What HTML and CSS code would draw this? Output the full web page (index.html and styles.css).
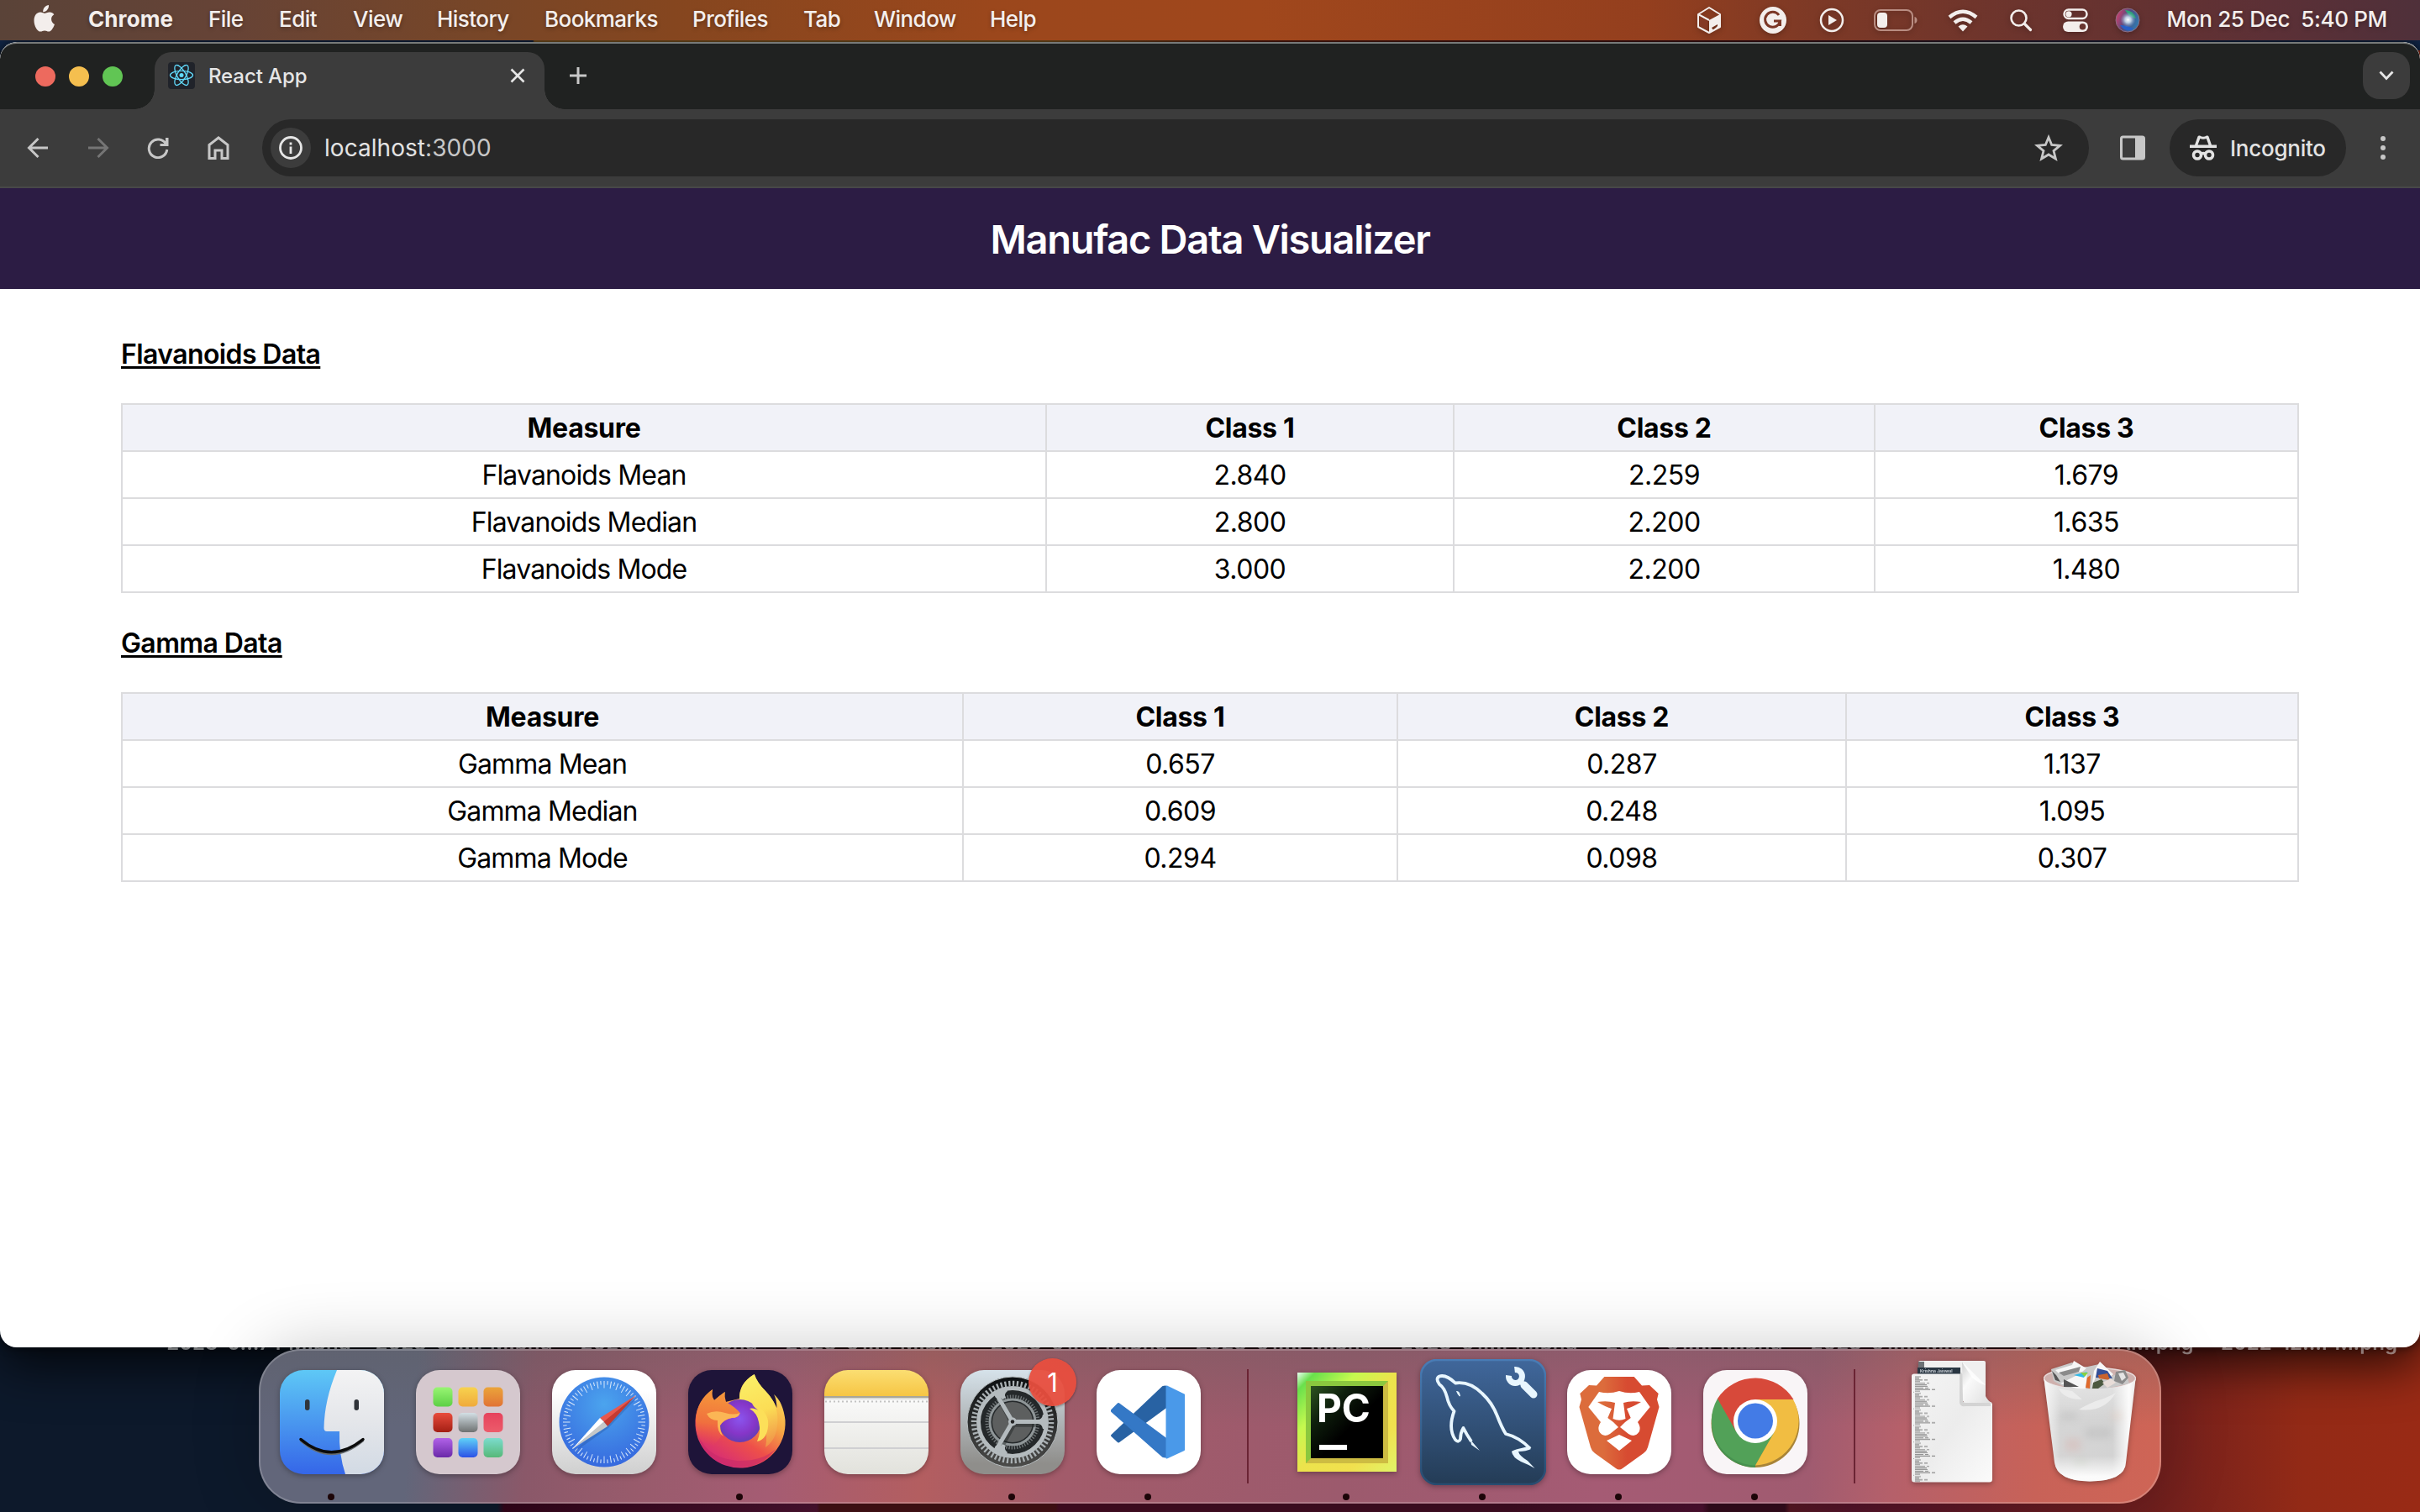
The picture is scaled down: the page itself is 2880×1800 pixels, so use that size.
FILE: index.html
```html
<!DOCTYPE html>
<html lang="en">
<head>
<meta charset="utf-8">
<title>React App</title>
<link rel="stylesheet" href="styles.css">
</head>
<body>
<div class="desktop">
  <div class="desk-files">
    <span>2023-0...7 PM.png</span><span>2023-01...PM.png</span><span>2023-01...PM.png</span><span>2023-01...PM.png</span><span>2023-01...PM.png</span><span>2023-01...PM.png</span><span>2023-01...PM.png</span><span>2023-01...PM.png</span><span>2023-01...PM.png</span><span>2023-01...AM.png</span><span>2022-12...PM.png</span>
  </div>

  <header class="menubar">
    <svg class="apple" viewBox="0 0 26 32"><path fill="#f3eeec" d="M18 0c.3 2.500-.7 4.600-2 6-1.300 1.500-3 2.300-4.800 2.100-.2-2.300.8-4.400 2-5.700C14.500 1 16.400.1 18 0zM25 22.900c-1.800 4.800-4.400 8.700-7 8.700-1.900 0-2.600-1.100-4.900-1.100s-3.100 1.100-4.900 1.100C4.400 31.600.5 24.700.5 18.400.5 12.300 4.200 8.600 8 8.600c2.200 0 3.900 1.300 5.300 1.300 1.300 0 3.300-1.500 6-1.300 2 .1 3.800.9 5 2.700-2.300 1.500-3.300 3.500-3.200 5.700.1 2.700 1.600 4.900 3.900 5.900z"/></svg>
    <nav class="menus"><b>Chrome</b><span>File</span><span>Edit</span><span>View</span><span>History</span><span>Bookmarks</span><span>Profiles</span><span>Tab</span><span>Window</span><span>Help</span></nav>
    <div class="status">
      <svg viewBox="0 0 30 34" width="30" height="34"><path fill="none" stroke="#f3eeec" stroke-width="2" stroke-linejoin="round" d="M15 2 28 10V25L15 32 2 25V10Z"/><path fill="#f3eeec" fill-rule="evenodd" d="M2 10 15 17V32L28 25V10L15 17M18 26l7-4v2l-5 5z"/><path fill="none" stroke="#f3eeec" stroke-width="2" d="M2 10 15 17"/><path fill="#853a25" d="M4 12.500 13.500 18V29L4 24Z"/></svg>
      <svg viewBox="0 0 32 32" width="32" height="32"><circle cx="16" cy="16" r="16" fill="#f3eeec"/><path fill="none" stroke="#7b3726" stroke-width="3" d="M23 10A9 9 0 1 0 24.500 17H17M24.500 16v7"/></svg>
      <svg viewBox="0 0 30 30" width="30" height="30"><circle cx="15" cy="15" r="13" fill="none" stroke="#f3eeec" stroke-width="2.500"/><path fill="#f3eeec" d="M11 9v12l10-6z"/></svg>
      <svg viewBox="0 0 52 26" width="52" height="26"><rect x="1" y="1" width="45" height="24" rx="7" fill="none" stroke="#b98d82" stroke-width="2"/><path fill="#b98d82" d="M48.500 9c4 1 4 7 0 8z"/><rect x="4" y="4" width="12" height="18" rx="4" fill="#f3eeec"/></svg>
      <svg viewBox="0 0 36 27" width="36" height="27"><g fill="none" stroke="#f3eeec" stroke-width="4.500"><path d="M2 9.500Q18-4 34 9.500M8 16Q18 7.500 28 16"/></g><path fill="#f3eeec" d="M12.500 20.500Q18 16 23.500 20.500L18 26.500Z"/></svg>
      <svg viewBox="0 0 28 28" width="28" height="28"><circle cx="11.500" cy="11.500" r="9" fill="none" stroke="#f3eeec" stroke-width="2.600"/><path stroke="#f3eeec" stroke-width="3.200" stroke-linecap="round" d="m18.500 18.500 7 7"/></svg>
      <svg viewBox="0 0 30 28" width="30" height="28"><rect x="1.500" y="1.500" width="27" height="10.500" rx="5.200" fill="none" stroke="#f3eeec" stroke-width="2.500"/><circle cx="7" cy="6.800" r="3.600" fill="#f3eeec"/><rect y="15.500" width="30" height="12.500" rx="6.200" fill="#f3eeec"/><circle cx="23.500" cy="21.800" r="3.800" fill="#68352f"/></svg>
      <svg viewBox="0 0 30 30" width="30" height="30"><defs><linearGradient id="siri" x1="0" y1=".3" x2="1" y2=".7"><stop stop-color="#d0406c"/><stop offset=".45" stop-color="#514a80"/><stop offset="1" stop-color="#2c7fb4"/></linearGradient><radialGradient id="siriGlow"><stop stop-color="#fff"/><stop offset=".4" stop-color="#d6ecfa" stop-opacity=".8"/><stop offset="1" stop-color="#8ac" stop-opacity="0"/></radialGradient></defs><circle cx="15" cy="15" r="14" fill="url(#siri)" stroke="#8c6d84"/><path d="M12 3q10 0 13 10-8-1-13-10z" fill="#2fa37a"/><path d="M6 21q8 0 16 4-8 6-16-4z" fill="#2861c8"/><circle cx="15.500" cy="14.500" r="9" fill="url(#siriGlow)"/></svg>
    </div>
    <div class="clock">Mon 25 Dec&nbsp; 5:40 PM</div>
  </header>

  <main class="window">
    <div class="tabstrip">
      <div class="lights"><i class="red"></i><i class="yellow"></i><i class="green"></i></div>
      <div class="tab">
        <svg viewBox="0 0 32 32" width="32" height="32"><rect width="32" height="32" rx="4" fill="#20232a"/><g fill="none" stroke="#61dafb" stroke-width="1.300"><ellipse cx="16" cy="15.500" rx="13.500" ry="5.200"/><ellipse cx="16" cy="15.500" rx="13.500" ry="5.200" transform="rotate(60 16 15.500)"/><ellipse cx="16" cy="15.500" rx="13.500" ry="5.200" transform="rotate(120 16 15.500)"/></g><circle cx="16" cy="15.500" r="2.500" fill="#61dafb"/></svg>
        <span class="tab-title">React App</span>
        <svg viewBox="0 0 18 18" width="18" height="18"><path stroke="#e6e6e6" stroke-width="2.600" d="m1.500 1.500 15 15m0-15-15 15"/></svg>
      </div>
      <svg class="plus" viewBox="0 0 20 20" width="20" height="20"><path stroke="#c8c8c8" stroke-width="3" d="M10 0v20M0 10h20"/></svg>
      <div class="tabsearch"><svg viewBox="0 0 18 12" width="18" height="12"><path fill="none" stroke="#e6e6e6" stroke-width="2.800" d="m1.500 1.500 7.500 8 7.500-8"/></svg></div>
    </div>

    <div class="toolbar">
      <div class="navs">
        <svg viewBox="0 0 26 26" width="26" height="26"><path fill="none" stroke="#c7c7c7" stroke-width="3" d="M25 13H3M13.500 2 2.500 13l11 11"/></svg>
        <svg viewBox="0 0 26 26" width="26" height="26"><path fill="none" stroke="#757575" stroke-width="3" d="M1 13h22M12.500 2l11 11-11 11"/></svg>
        <svg viewBox="0 0 26 26" width="26" height="26"><path fill="none" stroke="#c7c7c7" stroke-width="3" d="M22.500 8.500A10.800 10.800 0 1 0 23.800 15"/><path fill="#c7c7c7" d="M25.500 1v10h-10V8H22V1z"/></svg>
        <svg viewBox="0 0 26 30" width="26" height="30"><path fill="none" stroke="#c7c7c7" stroke-width="3" d="M2 11.500 13 3l11 8.500V27.500H17V18H9v9.500H2z"/></svg>
      </div>
      <div class="omnibox">
        <div class="info"><svg viewBox="0 0 28 28" width="28" height="28"><circle cx="14" cy="14" r="12.500" fill="none" stroke="#e6e6e6" stroke-width="2.800"/><path stroke="#e6e6e6" stroke-width="2.800" d="M14 12.500V21M14 7.500v3"/></svg></div>
        <span class="url">localhost<em>:3000</em></span>
        <svg viewBox="0 0 34 32" width="34" height="32"><path fill="none" stroke="#c7c7c7" stroke-width="2.800" d="m17 3.500 3.700 9 9.800.8-7.500 6.300 2.400 9.400L17 24l-8.400 5L11 19.600 3.500 13.300l9.800-.8z"/></svg>
      </div>
      <svg class="panel" viewBox="0 0 30 30" width="30" height="30"><rect x="1.500" y="2" width="27" height="26" rx="2" fill="none" stroke="#c7c7c7" stroke-width="3"/><path fill="#c7c7c7" d="M18 2h10v26H18z"/></svg>
      <div class="incog">
        <svg viewBox="0 0 32 30" width="32" height="30"><path fill="#e3e3e3" fill-rule="evenodd" d="M12 .5q4 2.500 8 0 2-.5 2.500 1L26 11.500H32V15H0v-3.500H6L9.500 1.500Q10 0 12 .5zM12.300 4 9.500 11.500h13L19.700 4Q16 5.500 12.300 4z"/><g fill="none" stroke="#e3e3e3" stroke-width="3.600"><circle cx="9" cy="23.500" r="4.500"/><circle cx="23" cy="23.500" r="4.500"/><path d="M13 22.500q3-2 6 0"/></g></svg>
        <span>Incognito</span>
      </div>
      <div class="kebab"><i></i><i></i><i></i></div>
    </div>

    <section class="page">
      <h1>Manufac Data Visualizer</h1>
      <div class="content">
        <h2>Flavanoids Data</h2>
        <table class="flav">
          <colgroup><col><col><col><col></colgroup>
          <tr><th>Measure</th><th>Class 1</th><th>Class 2</th><th>Class 3</th></tr>
          <tr><td>Flavanoids Mean</td><td>2.840</td><td>2.259</td><td>1.679</td></tr>
          <tr><td>Flavanoids Median</td><td>2.800</td><td>2.200</td><td>1.635</td></tr>
          <tr><td>Flavanoids Mode</td><td>3.000</td><td>2.200</td><td>1.480</td></tr>
        </table>
        <h2>Gamma Data</h2>
        <table class="gamma">
          <colgroup><col><col><col><col></colgroup>
          <tr><th>Measure</th><th>Class 1</th><th>Class 2</th><th>Class 3</th></tr>
          <tr><td>Gamma Mean</td><td>0.657</td><td>0.287</td><td>1.137</td></tr>
          <tr><td>Gamma Median</td><td>0.609</td><td>0.248</td><td>1.095</td></tr>
          <tr><td>Gamma Mode</td><td>0.294</td><td>0.098</td><td>0.307</td></tr>
        </table>
      </div>
    </section>
  </main>

  <div class="dock">
    <div class="app running">
      <svg class="squircle" viewBox="0 0 124 124"><defs><linearGradient id="fb" x2="0" y2="1"><stop stop-color="#5ec8f6"/><stop offset="1" stop-color="#3566e8"/></linearGradient><linearGradient id="fw" x2="0" y2="1"><stop stop-color="#f3f3f4"/><stop offset=".5" stop-color="#e4e6ea"/><stop offset="1" stop-color="#d2dae4"/></linearGradient></defs><path fill="url(#fb)" d="M0 0h124v124H0z"/><path fill="url(#fw)" d="M68 0Q53 36 52.500 69Q52.500 73 56 73H71Q70 100 78 124H124V0Z"/><rect x="30" y="35" width="5.500" height="13" rx="2.700" fill="#30343a"/><rect x="88.500" y="35" width="5.500" height="13" rx="2.700" fill="#30343a"/><path fill="none" stroke="#666c70" stroke-width="3.500" stroke-linecap="round" d="M25.500 84Q61 115 98.500 84"/><path fill="none" stroke="#0b0b0b" stroke-width="3.500" stroke-linecap="round" d="M25 82.500Q61 113 99 82.500"/></svg>
    </div>
    <div class="app">
      <svg class="squircle" viewBox="0 0 124 124"><defs><linearGradient id="l1" x2="0" y2="1"><stop stop-color="#98f573"/><stop offset="1" stop-color="#5dcf45"/></linearGradient><linearGradient id="l2" x2="0" y2="1"><stop stop-color="#f7d24e"/><stop offset="1" stop-color="#f0aa3c"/></linearGradient><linearGradient id="l3" x2="0" y2="1"><stop stop-color="#eba43a"/><stop offset="1" stop-color="#e17335"/></linearGradient><linearGradient id="l4" x2="0" y2="1"><stop stop-color="#e94b3c"/><stop offset="1" stop-color="#a31f14"/></linearGradient><linearGradient id="l5" x2="0" y2="1"><stop stop-color="#d3dfe5"/><stop offset="1" stop-color="#6e7171"/></linearGradient><linearGradient id="l6" x2="0" y2="1"><stop stop-color="#e6425c"/><stop offset="1" stop-color="#ec5c6b"/></linearGradient><linearGradient id="l7" x2="0" y2="1"><stop stop-color="#b162e8"/><stop offset="1" stop-color="#6a29a8"/></linearGradient><linearGradient id="l8" x2="0" y2="1"><stop stop-color="#5fd2f8"/><stop offset="1" stop-color="#2b51e6"/></linearGradient><linearGradient id="l9" x2="0" y2="1"><stop stop-color="#7cdccd"/><stop offset="1" stop-color="#56b878"/></linearGradient></defs><path fill="#d5c8ce" d="M0 0h124v124H0z"/><rect x="20.500" y="20.500" width="23" height="23" rx="5" fill="url(#l1)"/><rect x="50.500" y="20.500" width="23" height="23" rx="5" fill="url(#l2)"/><rect x="80.500" y="20.500" width="23" height="23" rx="5" fill="url(#l3)"/><rect x="20.500" y="51" width="23" height="23" rx="5" fill="url(#l4)"/><rect x="50.500" y="51" width="23" height="23" rx="5" fill="url(#l5)"/><rect x="80.500" y="51" width="23" height="23" rx="5" fill="url(#l6)"/><rect x="20.500" y="81" width="23" height="23" rx="5" fill="url(#l7)"/><rect x="50.500" y="81" width="23" height="23" rx="5" fill="url(#l8)"/><rect x="80.500" y="81" width="23" height="23" rx="5" fill="url(#l9)"/></svg>
    </div>
    <div class="app">
      <svg class="squircle" viewBox="0 0 124 124"><defs><linearGradient id="sw" x2="0" y2="1"><stop offset=".2" stop-color="#fff"/><stop offset="1" stop-color="#cfcfcf"/></linearGradient><radialGradient id="sb" cx=".5" cy=".3" r=".75"><stop stop-color="#4ba4ee"/><stop offset="1" stop-color="#3565dd"/></radialGradient></defs><path fill="url(#sw)" d="M0 0h124v124H0z"/><circle cx="62" cy="62" r="53.500" fill="url(#sb)"/><g fill="none" stroke="#d8e8fa"><circle cx="62" cy="62" r="44.800" stroke-width="8.500" pathLength="360" stroke-dasharray="1.300 8.700" stroke-dashoffset=".65"/><circle cx="62" cy="62" r="46.800" stroke-width="4.500" pathLength="360" stroke-dasharray="1.300 8.700" stroke-dashoffset="-4.350"/></g><path fill="#24529d" opacity=".35" d="M101 33 67 69 26 98 62 60z"/><path fill="#e8584d" d="M100 30 57 57 62 62z"/><path fill="#c43a30" d="M100 30 66 67 61.500 61.500z"/><path fill="#fff" d="M24 94 57 57 62 62z"/><path fill="#c6c8c8" d="M24 94 66 67 61.500 61.500z"/></svg>
    </div>
    <div class="app running">
      <svg class="squircle" viewBox="0 0 124 124"><defs><linearGradient id="ff" x1=".85" y1=".1" x2=".3" y2="1"><stop stop-color="#fde25c"/><stop offset=".35" stop-color="#f6a844"/><stop offset=".65" stop-color="#ee5049"/><stop offset="1" stop-color="#d4297a"/></linearGradient><linearGradient id="fy" x1=".5" y1="0" x2=".7" y2="1"><stop stop-color="#fbee66"/><stop offset=".5" stop-color="#fbdd55"/><stop offset="1" stop-color="#f09048"/></linearGradient><radialGradient id="fp" cx=".5" cy=".45" r=".6"><stop stop-color="#8a55ee"/><stop offset=".6" stop-color="#8636c8"/><stop offset="1" stop-color="#5b3fb0"/></radialGradient><linearGradient id="fo" x1=".4" y1="0" x2=".3" y2="1"><stop stop-color="#f59a3a"/><stop offset=".6" stop-color="#f0703e"/><stop offset="1" stop-color="#ee5049" stop-opacity="0"/></linearGradient></defs><path fill="#1e1439" d="M0 0h124v124H0z"/><path fill="url(#ff)" d="M29 23Q27 31 31 36 38 30 43.700 26 42 32 44.500 38L61 34Q60 16 78.700 5 82 15 92 25 100 33 105.500 45 105 34 102 29 113 38 115.500 60A53.500 53.500 0 0 1 8.500 66Q7 40 29 23Z"/><path fill="#c62967" opacity=".55" d="M8.800 66Q16 104 58 108 88 109 104 94 88 116 62 115.500 16 114 8.800 66Z"/><path fill="url(#fy)" d="M61 36Q60 16 78.700 5 82 15 92 25 104 37 106 52 109 80 92 92 98 62 74 45 66 38 61 36Z"/><circle cx="61.500" cy="60.500" r="25.500" fill="url(#fp)"/><path fill="#fcdf59" d="M73 46Q77 44 86 49 79 46 76 40 92 46 95 60 96 70 92 78 88 84 82 85 87 74 84 62 82 51 73 46Z"/><path fill="url(#fo)" d="M29 23Q27 31 31 36 38 30 43.700 26 43 32 45 38 56 44 61.700 51 60 57 52 57 42 59 38 66 38 72 40 78L30 90 12 84Q9 72 9 60 10 36 29 23Z"/><path fill="#fbb655" d="M22 52Q32 47 44 51 54 54 61.700 51 60 57 52 57 42 59 38 66 38 74 42 79 34 75 35 60 26 60 22 52Z"/></svg>
    </div>
    <div class="app">
      <svg class="squircle" viewBox="0 0 124 124"><defs><linearGradient id="ny" x2="0" y2="1"><stop stop-color="#fbde72"/><stop offset="1" stop-color="#f6c544"/></linearGradient><linearGradient id="nw" x2="0" y2="1"><stop stop-color="#fafafa"/><stop offset="1" stop-color="#e2e2dc"/></linearGradient></defs><path fill="url(#nw)" d="M0 31h124v93H0z"/><path fill="url(#ny)" d="M0 0h124v31H0z"/><path fill="#a9a698" d="M0 31h124v2H0z"/><path fill="#dcdcda" d="M0 33h124v2H0z"/><path stroke="#c3c3c3" stroke-width="2" stroke-dasharray="2 3" d="M1 37.500h124"/><path stroke="#cfcfd2" stroke-width="2" d="M0 62h124M0 93h124"/></svg>
    </div>
    <div class="app running">
      <svg class="squircle" viewBox="0 0 124 124"><defs><linearGradient id="gb" x2="0" y2="1"><stop stop-color="#d6e2ea"/><stop offset=".9" stop-color="#8f8e8b"/></linearGradient><linearGradient id="gd" x2="0" y2="1"><stop stop-color="#0c0f11"/><stop offset="1" stop-color="#4c4c4a"/></linearGradient></defs><path fill="url(#gb)" d="M0 0h124v124H0z"/><circle cx="62" cy="62" r="54" fill="url(#gd)" stroke="#b9bfc1" stroke-width="1"/><circle cx="62" cy="62" r="38" fill="#24282a"/><g fill="none"><circle cx="62" cy="62" r="46" stroke-width="6.500" stroke="#a9b0b3" pathLength="180" stroke-dasharray="1.400 1.600"/><circle cx="62" cy="62" r="40.500" stroke-width="5" stroke="#b4bbbe"/><circle cx="62" cy="62" r="30.500" stroke-width="4" stroke="#6f7577" pathLength="180" stroke-dasharray="1.300 1.700"/><circle cx="62" cy="62" r="27" stroke-width="3" stroke="#8f9698"/></g><circle cx="62" cy="62" r="24" fill="#5d5f5f"/><path fill="none" stroke="#1b1e20" stroke-opacity=".45" stroke-width="5.500" d="M62 65h37M62 64 44 30M64 64 46 97"/><path fill="none" stroke="#b4bbbe" stroke-width="5" d="M62 61.500h39M62 61.500 42.500 28M62 61.500 42.500 95"/><path fill="#b4bbbe" d="M92 59q5 0 6-6h4v17h-4q-1-6-6-6zM50 35q-2.500-4-8-2l-2-4 14-8 2 4q-5 4-2 8zM50 88q-2.500 4-8 2l-2 4 14 8 2-4q-5-4-2-8z"/><circle cx="62" cy="61.500" r="5" fill="#b4bbbe"/><circle cx="62" cy="61.500" r="2.200" fill="#222"/></svg>
      <span class="badge">1</span>
    </div>
    <div class="app running">
      <svg class="squircle" viewBox="0 0 124 124"><path fill="#fff" d="M0 0h124v124H0z"/><path fill="#2862a3" stroke="#2862a3" stroke-width="3" stroke-linejoin="round" d="M18.500 78 26 85 82 44V20L79 20.500Z"/><path fill="#3478c6" stroke="#3478c6" stroke-width="3" stroke-linejoin="round" d="M18.500 48 26 40.500 82 82V103L79 102.500 18.500 49Z"/><path fill="#4a99e9" stroke="#4a99e9" stroke-width="2" stroke-linejoin="round" d="M83.500 19.500 104 29.500V95L83.500 104.500Z"/></svg>
    </div>
    <div class="sep"></div>
    <div class="app running">
      <svg class="plain" viewBox="0 0 124 124"><defs><linearGradient id="p1" x2="1" y2="1"><stop stop-color="#e7fff0"/><stop offset=".09" stop-color="#69e04c"/><stop offset=".3" stop-color="#c5f94f"/><stop offset=".5" stop-color="#ece34c"/><stop offset=".75" stop-color="#f1e04e"/><stop offset="1" stop-color="#e0f468"/></linearGradient><linearGradient id="p2" x2=".8" y2=".8"><stop stop-color="#2d5420"/><stop offset=".35" stop-color="#0e1f0c"/><stop offset=".7" stop-color="#000"/></linearGradient></defs><path fill="url(#p1)" d="M3 3h118v118H3z"/><path fill="#8bc83e" d="M13 13h98v98H13z"/><path fill="#cdbc42" d="M111 13v98H13l10-10h78V23z"/><path fill="url(#p2)" d="M19 19h86v86H19z"/><text x="26" y="62" class="pc">PC</text><path fill="#fff" d="M29 89h33v6H29z"/></svg>
    </div>
    <div class="app running">
      <svg class="large" viewBox="0 0 150 150"><defs><linearGradient id="my" x2="0" y2="1"><stop stop-color="#40679b"/><stop offset="1" stop-color="#243c56"/></linearGradient><linearGradient id="mys" x2="0" y2="1"><stop stop-color="#497cb5"/><stop offset="1" stop-color="#284c70"/></linearGradient></defs><rect x="1" y="1" width="148" height="148" rx="19" fill="url(#my)" stroke="url(#mys)" stroke-width="2.500"/><path fill="none" stroke="#e8f6ff" stroke-width="3.800" stroke-linejoin="round" d="M61 98Q55 89 51.500 82 48 88 48 95 46 100 42 96 33 83 40.500 62 34 55 32 45 29 34 23 30 18 23 23 20.500 31 18 42 28.500 59 26 74 41 86 52 92 68 97 81 102 89 118 93 131 106.500"/><path fill="#e8f6ff" d="M60 96 71 109 61 102zM129 104 132 107Q126 110 117 110 118 115 128 121L136.500 130Q130 126 120 122 110 117 109 110 110 108 129 104zM43 38q4-1 5 6-2 1-2-1-1 0-3-5z"/><path fill="none" stroke="#e8f6ff" stroke-width="7" d="M112.500 12.500A8 8 0 1 1 105.500 19.500" /><path stroke="#e8f6ff" stroke-width="9" stroke-linecap="round" d="m124 31 11 11"/><path stroke="#e8f6ff" stroke-width="6" d="m117 24 10 10"/></svg>
    </div>
    <div class="app running">
      <svg class="squircle" viewBox="0 0 124 124"><defs><linearGradient id="br"><stop offset=".3" stop-color="#dc6c3c"/><stop offset=".6" stop-color="#d74b31"/></linearGradient></defs><path fill="#fff" d="M0 0h124v124H0z"/><path fill="url(#br)" d="M44.300 8H79.700L89 18.500 98 18 108.700 28 107 35 109.500 44 96 92Q95 96 91 99L66 117Q62 120 58 117L33 99Q29 96 28 92L14.500 44 17 35 15.300 28 26 18 35 18.500Z"/><path fill="#fff" d="M38 26Q50 29 62 25Q74 29 86 26L98.700 44L84 62Q88 68 86 73Q81 81 73 76L63 68Q68 62 75.700 57L71 46Q78 44 88 38Q76 36 67 39L69.500 58Q62 61.500 54.500 58L57 39Q48 36 36 38Q46 44 53 46L48.300 57Q56 62 61 68L51 76Q43 81 38 73Q36 68 40 62L25.300 44ZM62 77 77 84 62 96 47 84Z"/></svg>
    </div>
    <div class="app running">
      <svg class="squircle" viewBox="0 0 124 124"><path fill="#f9f5f7" d="M0 0h124v124H0z"/><circle cx="62" cy="63.500" r="52.500" fill="#a88438"/><path fill="#479150" d="M10 64a52 52 0 0 0 52 52V64z"/><path fill="#52a158" d="M17 34A53.500 53 0 0 0 62 113.500L84 75 62 61Z"/><path fill="#f1bd42" d="M107 35A53.500 53 0 0 1 62 113.500L84.500 74 62 35Z"/><path fill="#d7493a" d="M17 34A53.500 53.500 0 0 1 107.500 35H62L39 73Z"/><circle cx="62" cy="61" r="26" fill="#fff"/><circle cx="62" cy="60.500" r="21" fill="#437be6"/></svg>
    </div>
    <div class="sep"></div>
    <div class="app doc">
      <svg class="tall" viewBox="0 0 96 146"><defs><linearGradient id="dc" x2="1" y2="1"><stop stop-color="#f4f4f4"/><stop offset=".5" stop-color="#ececec"/><stop offset="1" stop-color="#fbfbfb"/></linearGradient><linearGradient id="dcurl" x2="1" y2="1"><stop stop-color="#cfcfcf"/><stop offset=".35" stop-color="#fafafa"/><stop offset="1" stop-color="#dedede"/></linearGradient><pattern id="lines" width="96" height="19.800" y="18" patternUnits="userSpaceOnUse"><path stroke="#8d8d8d" stroke-width="1.100" d="M4 1h7M4 2.900h5M4 4.800h9m2 0h4M4 6.700h6M4 8.600h12m2 0h3M4 10.500h14M4 12.400h15M4 14.300h10m2 0h4M4 16.200h18m2 0h4M4 18.100h6M2 19.600h1"/></pattern></defs><path fill="#f0f0f0" d="M8 2Q8 0 10 0H86Q88 0 88 2V48H8z"/><path fill="#6d7276" d="M8 1h7v8H8z"/><path fill="#293642" d="M7 8h51v8H7z"/><text x="10" y="14" class="doc-name">Krishna Jaiswal</text><path fill="url(#dc)" d="M0 18Q0 15.500 3 15.500H61V49H94L96 51V141Q96 144.500 92.500 144.500H3Q0 144.500 0 141z"/><path fill="url(#lines)" d="M0 18h60v126H0z"/><path fill="#888" opacity=".25" d="M57 12V50Q58 55 64 54H94V50z"/><path fill="url(#dcurl)" d="M60 1Q66 16 88 29V42Q90 47 95.500 50H64Q61 50 61 46z"/><path fill="#fff" opacity=".8" d="M60 1 88 29Q80 27 72 20z"/></svg>
    </div>
    <div class="app">
      <svg class="tall trash" viewBox="0 0 110 146"><defs><linearGradient id="tr"><stop stop-color="#f3f3f3"/><stop offset=".18" stop-color="#d5d5d5"/><stop offset=".75" stop-color="#d3d3d3"/><stop offset=".93" stop-color="#fbfbfb"/><stop offset="1" stop-color="#e3dedd"/></linearGradient><linearGradient id="tw" x2="0" y2="1"><stop stop-color="#fff" stop-opacity=".4"/><stop offset=".4" stop-color="#fff" stop-opacity="0"/><stop offset=".75" stop-color="#fff" stop-opacity="0"/><stop offset=".95" stop-color="#fff" stop-opacity=".9"/></linearGradient><filter id="soft"><feGaussianBlur stdDeviation="4"/></filter></defs><ellipse cx="55" cy="21" rx="54.500" ry="13" fill="#cfb1ae" stroke="#e9dcdb" stroke-width="1.500"/><path fill="#c9c9c9" d="M9 10 34 2 48 8 66 4 82 18 97 11 102 27 70 34 30 34 12 24z"/><path fill="#f7f7f7" d="M14 11 34 5 36 0 51 9 46 13 18 15zM20 27 40 17 52 13 50 34 42 34zM57 33 60 12 67 1 83 16 78 20 64 14z"/><path fill="#555" d="M10 12 15 17 20 25 14 23zM24 22 42 31 24 31z"/><path fill="#8b8b8b" d="M18 14 44 7 42 13 24 18zM86 13l11-2 4 9-7 8-10-4z"/><path fill="#e4e4e4" d="M89 15l6-1 3 6-5 4z"/><path fill="#2fb9e8" d="M36 17 52 13 48 20z"/><path fill="#88cf43" d="M44 14h9l-4 5z"/><path fill="#e06a2c" d="M52 20 56 17 55 33 50 32z"/><path fill="#354f96" d="M64 9 76 12 82 21 62 20z"/><path fill="#c9632d" d="M65 17 76 15 79 23 66 21z"/><path fill="#4c5940" d="M59 26 69 22 73 27 65 33H58z"/><path fill="#e8ddd8" d="M70 26 80 21 86 26 76 32z"/><path fill="url(#tr)" d="M.5 22Q10 33 55 33.500 100 33 109.500 22L98 121Q97 143 55 143.500 16 143 13 121z"/><g filter="url(#soft)" opacity=".3"><path fill="#d9a9a2" d="M26 92h18v16H26z"/><path fill="#aebba0" d="M36 118h16v8H36z"/><path fill="#e8c9b8" d="M80 60h14v10H80z"/><path fill="#aaa" d="M50 80h30v12H50zM20 60h20v10H20z"/></g><path fill="url(#tw)" d="M.5 22Q10 33 55 33.500 100 33 109.500 22L98 121Q97 143 55 143.500 16 143 13 121z"/><path fill="#efefef" opacity=".8" d="M42 58Q72 62 86 38 76 44 62 48 48 54 42 58ZM18 33Q24 46 46 46L34 36z"/></svg>
    </div>
  </div>
</div>
</body>
</html>
```
FILE: styles.css
```css
* { box-sizing: border-box; }
body { margin: 0; font-family: Inter, "Liberation Sans", sans-serif; }
svg { display: block; flex: none; }

.desktop {
  position: relative;
  width: 2880px;
  height: 1800px;
  overflow: hidden;
  background:
    linear-gradient(90deg, #12284a 0 634px, #8a5e25 636px 1250px, #5f1f12 1500px, #421318 2100px, #12284a 2640px) 0 0 / 100% 60px no-repeat,
    linear-gradient(90deg, #0d192b 0 592px, #33051a 600px, #4a1230 972px, #431115 976px 1256px, #430d22 1260px, #3f0d22 1800px, #4c1030 2026px, #330c1c 2034px 2124px, #571824 2130px, #54142a 2200px, #701f1e 2560px, #932a16 2740px, #992a15 2880px);
}
/* file names on the desktop, mostly hidden by the browser window */
.desk-files {
  position: absolute;
  left: 186px;
  top: 1582px;
  z-index: 0;
  display: grid;
  grid-template-columns: repeat(11, 244px);
  font-size: 24px;
  font-weight: 600;
  line-height: 34px;
  text-align: center;
  color: #cfcfcf;
  white-space: nowrap;
  opacity: .55;
}

.menubar {
  position: relative;
  display: flex;
  align-items: center;
  height: 48px;
  padding-left: 40px;
  color: #f4efed;
  font-size: 26px;
  font-weight: 500;
  text-shadow: 0 2px 5px rgba(0, 0, 0, .3);
  background: linear-gradient(90deg, #5a4338, #664336 270px, #774628 560px, #85461f 800px, #9b471c 1180px, #a0471c 1500px, #943f1e 1960px, #7d3926 2160px, #6c342d 2400px, #5c3036 2700px, #4f303a);
}
.apple { width: 26px; height: 32px; margin-top: -4px; }
.menus {
  display: grid;
  grid-template-columns: 143px 84px 88px 100px 128px 176px 132px 84px 138px 100px;
  margin-left: 39px;
  padding-bottom: 3px;
  letter-spacing: -.55px;
  white-space: nowrap;
}
.menus b { font-weight: 700; letter-spacing: .1px; }
.status { display: flex; align-items: center; position: relative; margin-left: 741px; filter: drop-shadow(0 2px 3px rgba(0, 0, 0, .25)); }
.status svg:nth-child(2) { margin-left: 45px; }
.status svg:nth-child(3) { margin-left: 39px; }
.status svg:nth-child(4) { margin-left: 35px; }
.status svg:nth-child(5) { margin-left: 36px; }
.status svg:nth-child(6) { margin-left: 37px; }
.status svg:nth-child(7) { margin-left: 36px; }
.status svg:nth-child(8) { margin-left: 32px; }
.clock { margin-left: auto; padding: 0 39px 3px 0; letter-spacing: -.35px; white-space: nowrap; }

.window {
  position: relative;
  display: flex;
  flex-direction: column;
  height: 1554px;
  margin-top: 2px;
  border-radius: 20px;
  overflow: hidden;
  background: #fff;
}
.desktop::before {
  content: "";
  position: absolute;
  top: 50px;
  left: 0;
  z-index: 0;
  width: 2880px;
  height: 1554px;
  border-radius: 20px;
  box-shadow: 0 20px 60px rgba(0, 0, 0, .75), 0 0 12px rgba(0, 0, 0, .6);
}

.tabstrip {
  display: flex;
  flex: none;
  height: 80px;
  padding: 10px 12px 0 42px;
  background: #202221;
  border-top: 2px solid #777a79;
  border-radius: 20px 20px 0 0;
}
.lights { display: flex; gap: 16px; padding-top: 17px; width: 142px; }
.lights i { width: 24px; height: 24px; border-radius: 50%; }
.red { background: #ed6a5e; }
.yellow { background: #f5bf4f; }
.green { background: #61c554; }
.tab {
  position: relative;
  display: flex;
  align-items: center;
  width: 464px;
  height: 68px;
  padding: 0 23px 12px 16px;
  border-radius: 20px 20px 0 0;
  background: #3c3c3c;
}
.tab::before, .tab::after {
  content: "";
  position: absolute;
  bottom: 0;
  width: 24px;
  height: 24px;
  background: radial-gradient(circle at 0 0, transparent 23.5px, #3c3c3c 24px);
}
.tab::before { left: -24px; }
.tab::after { right: -24px; transform: scaleX(-1); }
.tab-title { flex: 1; margin-left: 16px; color: #e6e6e6; font-size: 24px; font-weight: 450; letter-spacing: -.1px; }
.plus { margin: 18px 0 0 30px; }
.tabsearch {
  display: flex;
  align-items: center;
  justify-content: center;
  width: 56px;
  height: 56px;
  margin-left: auto;
  border-radius: 20px;
  background: #3c3c3c;
}

.toolbar {
  display: flex;
  flex: none;
  align-items: center;
  height: 94px;
  padding-bottom: 2px;
  padding-left: 32px;
  background: #3c3c3c;
  box-shadow: inset 0 -2px #484848;
}
.navs { display: flex; align-items: center; gap: 45.600px; width: 280px; }
.omnibox {
  display: flex;
  align-items: center;
  width: 2174px;
  height: 68px;
  padding: 0 31px 0 10px;
  border-radius: 34px;
  background: #282828;
}
.info { display: flex; align-items: center; justify-content: center; width: 48px; height: 48px; border-radius: 50%; background: #3c3c3c; }
.url { flex: 1; margin-left: 16px; color: #e3e3e3; font-size: 28px; letter-spacing: .05px; }
.url em { color: #c7c7c7; font-style: normal; }
.panel { margin-left: 37px; }
.incog {
  display: flex;
  align-items: center;
  gap: 16px;
  width: 210px;
  height: 68px;
  margin-left: 29px;
  padding-left: 24px;
  border-radius: 34px;
  background: #282828;
  color: #e3e3e3;
  font-size: 26px;
  font-weight: 450;
  letter-spacing: -.25px;
}
.kebab { display: flex; flex-direction: column; gap: 5px; margin-left: 41px; }
.kebab i { width: 6px; height: 6px; border-radius: 50%; background: #c7c7c7; }

.page { color: #000; }
.page h1 {
  height: 120px;
  margin: 0;
  background: #2c1c44;
  color: #fff;
  font-size: 47px;
  font-weight: 600;
  line-height: 122px;
  letter-spacing: -1.300px;
  text-align: center;
}
.content { padding: 56px 144px 0; }
.content h2 {
  height: 80px;
  margin: 0;
  font-size: 32px;
  font-weight: 600;
  line-height: 44px;
  letter-spacing: -.6px;
  text-decoration: underline;
  text-decoration-thickness: 3px;
  text-underline-offset: 3px;
}
table { width: 2592px; table-layout: fixed; border-collapse: collapse; margin-bottom: 38px; font-size: 32px; text-align: center; }
th, td { height: 56px; padding: 2px 0 0; border: 2px solid #dcdcde; line-height: 52px; }
td { letter-spacing: -.5px; }
td:first-child { letter-spacing: -.86px; }
th { background: #f1f2f8; font-weight: 650; letter-spacing: -.3px; }
.flav col:nth-child(1) { width: 1100px; }
.flav col:nth-child(2) { width: 485px; }
.flav col:nth-child(3) { width: 501px; }
.gamma col:nth-child(1) { width: 1001px; }
.gamma col:nth-child(2) { width: 517px; }
.gamma col:nth-child(3) { width: 534px; }

.dock {
  position: absolute;
  left: 308px;
  top: 1606px;
  display: flex;
  width: 2264px;
  height: 184px;
  padding-left: 4px;
  border: 2px solid rgba(255, 255, 255, .2);
  border-radius: 50px;
  background:
    linear-gradient(180deg, rgba(90, 90, 90, .3), transparent 50%),
    linear-gradient(96deg, #62667a 0 190px, #8a5869 330px, #985b6c 460px, #a55c73 620px, #b35e60 800px, #a25b6a 960px, #9c5a6d 1300px, #a55b74 1600px, #a05b70 1850px, #b5606a 1950px, #c86258 2120px, #cf6556);
  background-origin: border-box;
  box-shadow: 0 0 80px rgba(0, 0, 0, .22);
}
.app { position: relative; display: flex; align-items: center; justify-content: center; width: 162px; height: 170px; }
.app svg { filter: drop-shadow(0 2px 3px rgba(0, 0, 0, .3)); }
.squircle { width: 124px; height: 124px; border-radius: 28px; }
.plain { width: 124px; height: 124px; }
.large { width: 150px; height: 150px; }
.tall { width: 96px; height: 146px; }
.doc { padding-right: 4px; }
.trash { width: 110px; }
.running::after { content: ""; position: absolute; left: 76px; top: 170px; width: 8px; height: 8px; border-radius: 50%; background: #1c0508; }
.badge {
  position: absolute;
  right: 5px;
  top: 9px;
  width: 57px;
  height: 57px;
  border-radius: 50%;
  background: rgba(232, 78, 62, .95);
  color: #fff;
  font-size: 31px;
  line-height: 58px;
  text-align: center;
  box-shadow: 0 1px 3px rgba(0, 0, 0, .4);
}
.sep { width: 2px; height: 136px; margin: 22px 36px 0; background: #6b2434; }
.pc { font: 700 46px Inter, sans-serif; fill: #fff; }
.doc-name { font: 700 5px Inter, sans-serif; fill: #c8ced4; }
```
